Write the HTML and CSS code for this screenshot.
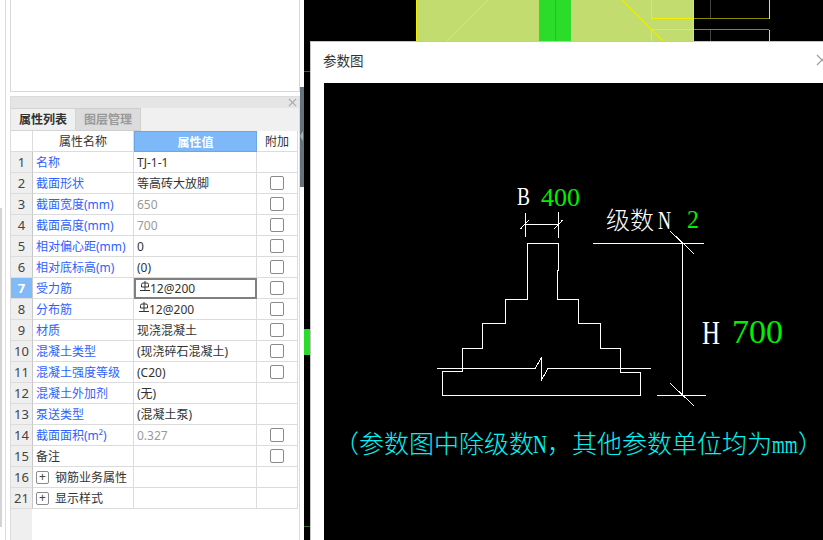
FILE: index.html
```html
<!DOCTYPE html>
<html lang="zh">
<head>
<meta charset="utf-8">
<title>参数图</title>
<link rel="stylesheet" href="styles.css">
</head>
<body>
<div class="app">
  <aside class="side">
    <div class="edge-band"></div>
    <div class="side-inner">
      <div class="top-box"></div>
      <section class="panel">
        <div class="panel-bar">
          <svg class="panel-close" width="10" height="10" viewBox="0 0 10 10"><path d="M1 1L9 9M9 1L1 9"/></svg>
        </div>
        <div class="tabs">
          <div class="tab tab-active">属性列表</div>
          <div class="tab">图层管理</div>
        </div>
        <table class="props">
          <colgroup><col class="c-num"><col class="c-name"><col class="c-val"><col class="c-add"></colgroup>
          <thead>
            <tr><th class="num"></th><th>属性名称</th><th class="sel-head">属性值</th><th>附加</th></tr>
          </thead>
          <tbody>
            <tr><td class="num">1</td><td class="name">名称</td><td class="val">TJ-1-1</td><td></td></tr>
            <tr><td class="num">2</td><td class="name">截面形状</td><td class="val">等高砖大放脚</td><td class="add"><span class="check"></span></td></tr>
            <tr><td class="num">3</td><td class="name">截面宽度(mm)</td><td class="val muted">650</td><td class="add"><span class="check"></span></td></tr>
            <tr><td class="num">4</td><td class="name">截面高度(mm)</td><td class="val muted">700</td><td class="add"><span class="check"></span></td></tr>
            <tr><td class="num">5</td><td class="name">相对偏心距(mm)</td><td class="val">0</td><td class="add"><span class="check"></span></td></tr>
            <tr><td class="num">6</td><td class="name">相对底标高(m)</td><td class="val">(0)</td><td class="add"><span class="check"></span></td></tr>
            <tr><td class="num num-sel">7</td><td class="name">受力筋</td><td class="val val-sel"><svg class="rebar" width="10" height="11" viewBox="0 0 10 11"><path d="M5 0V10M1.5 6V3.5Q1.5 2 3 2H7Q8.5 2 8.5 3.5V6ZM0 9.5H10"/></svg>12@200</td><td class="add"><span class="check"></span></td></tr>
            <tr><td class="num">8</td><td class="name">分布筋</td><td class="val"><svg class="rebar" width="10" height="11" viewBox="0 0 10 11"><path d="M5 0V10M1.5 6V3.5Q1.5 2 3 2H7Q8.5 2 8.5 3.5V6ZM0 9.5H10"/></svg>12@200</td><td class="add"><span class="check"></span></td></tr>
            <tr><td class="num">9</td><td class="name">材质</td><td class="val">现浇混凝土</td><td class="add"><span class="check"></span></td></tr>
            <tr><td class="num">10</td><td class="name">混凝土类型</td><td class="val">(现浇碎石混凝土)</td><td class="add"><span class="check"></span></td></tr>
            <tr><td class="num">11</td><td class="name">混凝土强度等级</td><td class="val">(C20)</td><td class="add"><span class="check"></span></td></tr>
            <tr><td class="num">12</td><td class="name">混凝土外加剂</td><td class="val">(无)</td><td></td></tr>
            <tr><td class="num">13</td><td class="name">泵送类型</td><td class="val">(混凝土泵)</td><td></td></tr>
            <tr><td class="num">14</td><td class="name">截面面积(m²)</td><td class="val muted">0.327</td><td class="add"><span class="check"></span></td></tr>
            <tr><td class="num">15</td><td class="plain">备注</td><td class="val"></td><td class="add"><span class="check"></span></td></tr>
            <tr><td class="num">16</td><td class="plain"><span class="group"><span class="plus">+</span>钢筋业务属性</span></td><td class="val"></td><td></td></tr>
            <tr><td class="num">21</td><td class="plain"><span class="group"><span class="plus">+</span>显示样式</span></td><td class="val"></td><td></td></tr>
          </tbody>
        </table>
      </section>
    </div>
    <div class="scroll-col"><div class="scroll-thumb"><span class="scroll-arrow"></span></div></div>
  </aside>

  <main class="stage">
    <svg class="scene" width="519" height="540" viewBox="304 0 519 540">
      <rect class="s-fill" x="416.5" y="-2" width="277" height="50"/>
      <rect class="s-green" x="539" y="-2" width="32" height="50"/>
      <path class="s-grey" d="M555.5 0V41"/>
      <path class="s-yellow" d="M488 0L447 41M622 0L663 41M651.5 0V18.5H694M651.5 29.5H694M651.5 29.5V41M769.5 0V18.5M769.5 29.5V41"/>
      <path class="s-olive" d="M694 18.5H769M694 29.5H769"/>
      <path class="s-dark" d="M710.5 0V18M710.5 30V41"/>
      <rect class="s-green" x="304" y="329" width="6" height="26"/>
      <path class="s-edge" d="M304 71.5H310"/>
      <path class="s-edge" d="M304 526.5H310"/>
    </svg>

    <div class="dialog">
      <header class="dialog-head">
        <span class="dialog-title">参数图</span>
        <svg class="dialog-close" width="12" height="12" viewBox="0 0 12 12"><path d="M1 1L11 11M11 1L1 11"/></svg>
      </header>
      <div class="dialog-body">
        <svg class="drawing" width="499" height="457" viewBox="324 83 499 457">
          <path class="ln" d="M527 299.5V243.5H558V270H557.5V299.5H578.5V323.5H600.5V348.5H620.5V372.5H640.5V395.5H442.5V371H462.5V348.5H482.5V323.5H505.5V299.5H527"/>
          <path class="ln" d="M437 368.5H535L541.5 357.5V380L548 368.5H651"/>
          <path class="ln" d="M525.5 213V237M558.5 212V238M525.5 224.5H558.5M520.7 228.7L528.7 220M554.3 228.7L562.7 220"/>
          <path class="ln" d="M593 243.5H704M682.5 243.5V395.5M657 395.5H706M670 231L694 253.7M670 383.3L694 405.7"/>
          <text class="t-white t-mid" x="517" y="205" textLength="13" lengthAdjust="spacingAndGlyphs">B</text>
          <text class="t-green t-mid" x="541" y="206" textLength="39" lengthAdjust="spacingAndGlyphs">400</text>
          <text class="t-white t-cjk" x="606" y="229">级数</text>
          <text class="t-white t-mid" x="658" y="229" textLength="13" lengthAdjust="spacingAndGlyphs">N</text>
          <text class="t-green t-mid" x="687" y="228" textLength="12" lengthAdjust="spacingAndGlyphs">2</text>
          <text class="t-white t-large" x="702" y="344" textLength="18" lengthAdjust="spacingAndGlyphs">H</text>
          <text class="t-green t-large2" x="732" y="343" textLength="51" lengthAdjust="spacingAndGlyphs">700</text>
          <text class="t-cyan" x="334" y="453">（参数图中除级数</text>
          <text class="t-cyan" transform="translate(533 453) scale(.77 1)">N</text>
          <text class="t-cyan" x="547" y="453">，其他参数单位均为</text>
          <text class="t-cyan" transform="translate(772 453) scale(.66 1)">mm</text>
          <text class="t-cyan" x="798" y="453">）</text>
        </svg>
      </div>
    </div>
  </main>
</div>
</body>
</html>
```

FILE: styles.css
```css
* { box-sizing: border-box; }
html, body { margin: 0; padding: 0; }
body {
  width: 823px;
  height: 540px;
  overflow: hidden;
  background: #000;
  font-family: "Noto Sans", "Noto Sans CJK SC", sans-serif;
  font-size: 12px;
  color: #333;
}
.app { display: flex; width: 823px; height: 540px; }

/* left side */
.side { display: flex; width: 304px; height: 540px; background: #fff; flex: none; }
.edge-band { width: 2px; height: 319px; margin: 208px 3px 0 0; background: #d4d4d4; flex: none; }
.side-inner {
  width: 295px;
  height: 540px;
  padding-left: 4px;
  border-left: 1px solid #dcdcdc;
  flex: none;
}
.top-box { height: 92px; border: 1px solid #d8d8d8; border-top: 0; background: #fff; }
.panel {
  height: 444px;
  margin-top: 4px;
  border: 1px solid #dcdcdc;
  border-bottom: 0;
  background: linear-gradient(to right, #efefef 21px, #fff 21px);
}
.panel-bar { display: flex; justify-content: flex-end; height: 11px; background: #e5e5e5; padding-right: 2px; }
.panel-close { display: block; margin-top: 1px; width: 9px; height: 9px; }
.panel-close path { stroke: #aaa; stroke-width: 1.4; fill: none; }
.tabs { display: flex; height: 23px; background: #f0f0f0; }
.tab {
  width: 65px;
  line-height: 21px;
  text-align: center;
  font-weight: 700;
  color: #999;
  background: #dcdcdc;
  border: 1px solid #cfcfcf;
  border-left: 0;
}
.tab-active { width: 65px; color: #333; background: #f0f0f0; border-color: #d4d4d4; }

.props {
  width: 287px;
  table-layout: fixed;
  border-collapse: separate;
  border-spacing: 0;
  background: #fff;
}
.c-num { width: 22px; }
.c-name { width: 101px; }
.c-val { width: 123px; }
.c-add { width: 41px; }
.props th, .props td {
  height: 21px;
  padding: 0;
  border-right: 1px solid #dcdcdc;
  border-bottom: 1px solid #dcdcdc;
  font-weight: 400;
  white-space: nowrap;
  overflow: hidden;
}
.props th { text-align: center; }
.props th.sel-head {
  background: #7db8f8;
  color: #fff;
  font-weight: 700;
  border: 1px solid #6ca6e8;
}
.props td.num {
  text-align: center;
  font-size: 13px;
  color: #444;
  background: #efefef;
  border-right: 1px solid #c8c8c8;
}
.props th.num { background: #fff; }
.props td.num-sel { background: #80baf8; color: #fff; font-weight: 700; }
.props td.name { padding-left: 3px; color: #2f5fff; }
.props td.plain { padding-left: 3px; color: #333; }
.props td.val { padding-left: 3px; color: #333; }
.props td.muted { color: #999; }
.props td.val-sel { border: 2px solid #808080; padding-left: 2px; }
.props td.add { text-align: center; }
.check {
  display: block;
  width: 14px;
  height: 14px;
  margin: 0 0 0 13px;
  border: 1px solid #8a8a8a;
  border-radius: 2px;
  background: #fff;
}
.rebar { display: inline-block; margin: -5px 0 1px 2px; vertical-align: middle; }
.rebar path { stroke: #333; stroke-width: 1; fill: none; }
.group { display: flex; align-items: center; }
.plus {
  display: block;
  width: 13px;
  height: 13px;
  margin-right: 6px;
  border: 1px solid #8a8a8a;
  border-radius: 2px;
  line-height: 10px;
  text-align: center;
  font-size: 12px;
  color: #444;
}

.scroll-col { width: 4px; flex: none; }
.scroll-thumb { position: relative; width: 4px; height: 100px; margin-top: 87px; background: #66727c; }
.scroll-arrow {
  position: absolute;
  left: 0;
  top: 44px;
  border-style: solid;
  border-width: 5px 3px 5px 0;
  border-color: transparent #a9b1b8 transparent transparent;
}

/* right stage */
.stage { position: relative; flex: 1; height: 540px; background: #000; overflow: hidden; }
.scene { display: block; position: absolute; left: 0; top: 0; shape-rendering: crispEdges; }
.s-fill { fill: #c3dc70; stroke: #f0f000; stroke-width: 1; }
.s-green { fill: #2bdc2b; }
.s-grey { stroke: #6f8f50; stroke-width: 1; }
.s-yellow { stroke: #f0f000; stroke-width: 1; fill: none; }
.s-olive { stroke: #8a8a00; stroke-width: 1; fill: none; }
.s-dark { stroke: #444; stroke-width: 1; }
.s-edge { stroke: #3f5f2f; stroke-width: 1; }

.dialog {
  position: absolute;
  left: 6px;
  top: 41px;
  right: 0;
  bottom: 0;
  display: flex;
  flex-direction: column;
  background: #fff;
  border-left: 1px solid #c4c4c4;
  border-top: 1px solid #c4c4c4;
  overflow: hidden;
}
.dialog-head {
  display: flex;
  align-items: center;
  justify-content: space-between;
  height: 41px;
  flex: none;
  padding: 0 0 6px 12px;
}
.dialog-title { font-size: 13.5px; color: #333; }
.dialog-close { margin-right: -5px; }
.dialog-close path { stroke: #999; stroke-width: 1.2; fill: none; }
.dialog-body { flex: 1; margin-left: 13px; background: #000; }
.drawing { display: block; }
.ln { fill: none; stroke: #fff; stroke-width: 1; shape-rendering: crispEdges; }
.drawing text { font-family: "Liberation Serif", "Noto Sans CJK SC", serif; font-size: 25px; }
.t-white { fill: #fff; }
.t-green { fill: #00f000; }
.t-cyan { fill: #00f4f4; font-weight: 300; }
.drawing .t-cjk { font-size: 24px; font-weight: 300; }
.drawing .t-mid { font-size: 26px; }
.drawing .t-large { font-size: 34px; }
.drawing .t-large2 { font-size: 34px; }
```
